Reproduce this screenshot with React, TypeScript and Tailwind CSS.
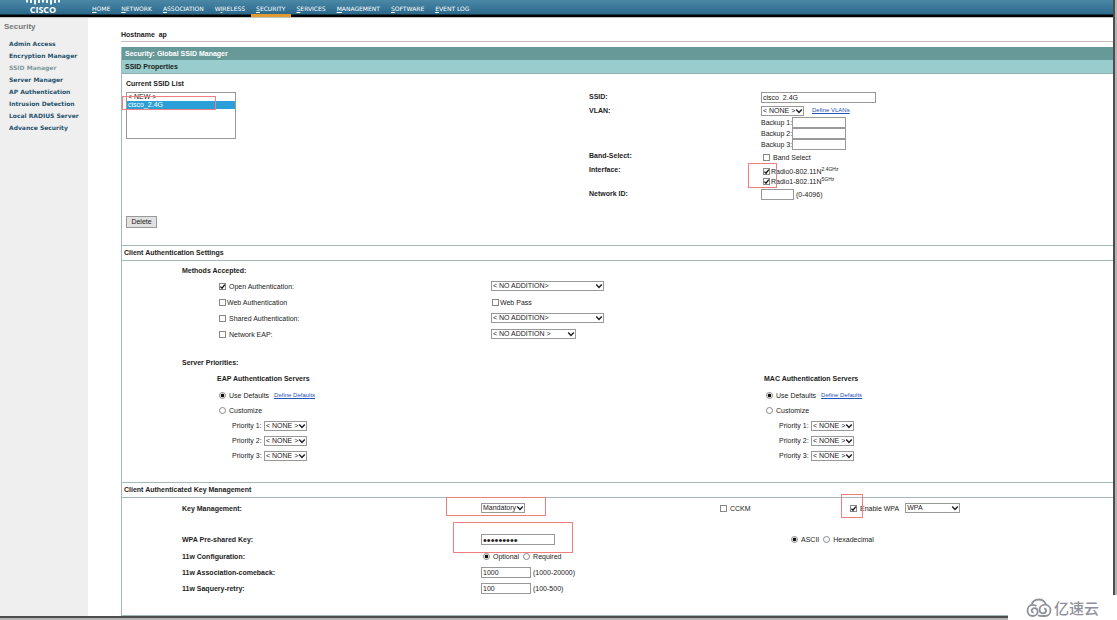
import { useId, type ReactNode } from "react"
import { clsx } from "clsx"

const navItems = [
  { name: "HOME", key: 0 },
  { name: "NETWORK", key: 0 },
  { name: "ASSOCIATION", key: 0 },
  { name: "WIRELESS", key: 1 },
  { name: "SECURITY", key: 0 },
  { name: "SERVICES", key: 0 },
  { name: "MANAGEMENT", key: 0 },
  { name: "SOFTWARE", key: 0 },
  { name: "EVENT LOG", key: 0 },
]

const sideItems = [
  "Admin Access",
  "Encryption Manager",
  "SSID Manager",
  "Server Manager",
  "AP Authentication",
  "Intrusion Detection",
  "Local RADIUS Server",
  "Advance Security",
]

function CiscoLogo() {
  return (
    <div className="flex w-[86px] flex-col items-center">
      <svg width="36" height="5" viewBox="0 0 36 5" className="block" aria-hidden="true">
        <path
          d="M2 0v2.500M6 0v3M10 0v4.500M14 0v3M18 0v2.500M22 0v3M26 0v4.500M30 0v3M34 0v2.500"
          stroke="#fff"
          strokeWidth="1.8"
          fill="none"
        />
      </svg>
      <span className="font-['Open_Sans',sans-serif] text-[9px]/[9px] font-bold text-white">CISCO</span>
    </div>
  )
}

function Header() {
  return (
    <header className="flex h-[18px] border-b border-[#b9c4c4] bg-[linear-gradient(#4b88a6,#2c6a8d_14px,#000_15px)]">
      <CiscoLogo />
      <nav className="flex gap-px pl-px font-['DejaVu_Sans',sans-serif] text-[6px]/[18px] text-white">
        {navItems.map(({ name, key }) => (
          <a
            key={name}
            href="#"
            className={clsx("h-[17px] px-[5px]", name === "SECURITY" && "border-b-[3px] border-[#e39a2e]")}
          >
            {name.slice(0, key)}
            <u>{name[key]}</u>
            {name.slice(key + 1)}
          </a>
        ))}
      </nav>
    </header>
  )
}

function Sidebar() {
  return (
    <aside className="w-[88px] shrink-0 bg-[#efefef]">
      <h2 className="pt-[3px] pl-1 text-[8px]/[12px] font-bold text-[#777]">Security</h2>
      <ul className="mt-[5px] pl-[9px] font-['DejaVu_Sans',sans-serif] text-[6px]/[12px] font-bold whitespace-nowrap text-[#27536e]">
        {sideItems.map((item) => (
          <li key={item} className="h-3">
            <a href="#" className={clsx(item === "SSID Manager" && "text-[#7d9a9c]")}>
              {item}
            </a>
          </li>
        ))}
      </ul>
    </aside>
  )
}

// red frame laid over a control to point it out
function Mark({ className }: { className: string }) {
  return <span aria-hidden="true" className={clsx("pointer-events-none absolute border border-[#f08080]", className)} />
}

function Select({ value, className, label, id }: { value: string; className: string; label?: string; id?: string }) {
  return (
    <span className={clsx("relative inline-flex", className)}>
      <select
        id={id}
        aria-label={label}
        className="h-[10px] w-full appearance-none border border-[#999] bg-white pl-px text-[7px]/[8px]"
      >
        <option>{value}</option>
      </select>
      <svg
        viewBox="0 0 8 6"
        width="8"
        height="6"
        className="pointer-events-none absolute top-[2px] right-px"
        aria-hidden="true"
      >
        <path d="M1.2 1.5 4 4.4 6.8 1.5" stroke="#222" strokeWidth="1.5" fill="none" />
      </svg>
    </span>
  )
}

function Check({ children, checked, tight }: { children: ReactNode; checked?: boolean; tight?: boolean }) {
  return (
    <label className={clsx("relative flex items-center", tight ? "gap-px" : "gap-[3px]")}>
      <input
        type="checkbox"
        defaultChecked={checked}
        className="peer size-[7px] shrink-0 appearance-none border border-[#888] bg-white"
      />
      <svg
        viewBox="0 0 7 7"
        className="pointer-events-none absolute left-0 hidden size-[7px] peer-checked:block"
        aria-hidden="true"
      >
        <path d="M1.4 3.6 3 5.2 5.8 1.6" stroke="#111" strokeWidth="1.3" fill="none" />
      </svg>
      <span>{children}</span>
    </label>
  )
}

function Radio({ children, name, checked }: { children: ReactNode; name: string; checked?: boolean }) {
  return (
    <label className="flex items-center gap-[3px]">
      <input
        type="radio"
        name={name}
        defaultChecked={checked}
        className="size-[7px] shrink-0 appearance-none rounded-full border border-[#888] bg-white checked:bg-[radial-gradient(#111_45%,#fff_60%)]"
      />
      {children}
    </label>
  )
}

function TextBox({
  className,
  value,
  label,
  id,
  type = "text",
}: {
  className: string
  value?: string
  label?: string
  id?: string
  type?: string
}) {
  return (
    <input
      id={id}
      type={type}
      aria-label={label}
      defaultValue={value}
      className={clsx(
        "border border-[#999] bg-white px-px",
        type === "password" ? "text-[11px]/[9px]" : "text-[7px]/[8px]",
        className
      )}
    />
  )
}

function Link({ children }: { children: ReactNode }) {
  return (
    <a href="#" className="text-[6px] text-[#2352b8] underline">
      {children}
    </a>
  )
}

function SectionTitle({ children }: { children: ReactNode }) {
  return <h3 className="border-y border-[#a3b8b8] pl-[2px] text-[7px]/[14px] font-bold">{children}</h3>
}

function SsidProperties() {
  return (
    <section className="grid h-[171px] grid-cols-[467fr_172fr_352fr]">
      <div className="flex flex-col items-start pl-1">
        <label htmlFor="ssid-list" className="mt-1 h-[14px] font-bold leading-[12px]">
          Current SSID List
        </label>
        <div className="relative">
          <select
            id="ssid-list"
            size={5}
            defaultValue="cisco_2.4G"
            className="block h-[47px] w-[110px] appearance-none overflow-hidden border border-[#999] bg-white text-[7px]/[8px]"
          >
            <option className="h-2 min-h-0 p-0 pl-px">&lt; NEW &gt;</option>
            <option className="h-2 min-h-0 bg-[linear-gradient(#2a9fd8,#2a9fd8)] p-0 pl-px [-webkit-text-fill-color:#fff]">
              cisco_2.4G
            </option>
          </select>
          <Mark className="top-1 -left-1 h-[14px] w-[94px]" />
        </div>
        <button
          type="button"
          className="mt-[77px] h-3 w-[31px] border border-[#999] bg-[#e1e1e1] text-center text-[7px]/[10px]"
        >
          Delete
        </button>
      </div>

      <div className="flex flex-col pt-4 font-bold">
        <label htmlFor="ssid" className="h-[14px] leading-[14px]">
          SSID:
        </label>
        <label htmlFor="vlan" className="h-[46px] leading-[14px]">
          VLAN:
        </label>
        <span className="h-[14px] leading-[12px]">Band-Select:</span>
        <span className="h-[23px] leading-[11px]">Interface:</span>
        <label htmlFor="network-id" className="h-[14px] leading-[14px]">
          Network ID:
        </label>
      </div>

      <div className="flex flex-col pt-4">
        <div className="flex h-[14px] items-center">
          <TextBox id="ssid" value="cisco_2.4G" className="h-[11px] w-[115px]" />
        </div>
        <div className="flex h-[13px] items-center gap-2">
          <Select id="vlan" value="< NONE >" className="w-[43px]" />
          <Link>Define VLANs</Link>
        </div>
        {[1, 2, 3].map((n) => (
          <label key={n} className="flex h-[11px] items-center">
            <span className="w-[31px] shrink-0 whitespace-nowrap">Backup {n}:</span>
            <TextBox className="h-[11px] w-[54px]" />
          </label>
        ))}
        <div className="flex h-[14px] items-center pl-[2px]">
          <Check>Band Select</Check>
        </div>
        <div className="relative h-[23px] pt-[2px] pl-[2px]">
          <div className="flex h-[10px] items-center">
            <Check checked tight>
              Radio0-802.11N<sup className="text-[5px]">2.4GHz</sup>
            </Check>
          </div>
          <div className="flex h-[10px] items-center">
            <Check checked tight>
              Radio1-802.11N<sup className="text-[5px]">5GHz</sup>
            </Check>
          </div>
          <Mark className="-top-px -left-[13px] h-[25px] w-[29px]" />
        </div>
        <div className="flex h-[14px] items-center gap-[2px]">
          <TextBox id="network-id" className="h-[11px] w-[33px]" />
          (0-4096)
        </div>
      </div>
    </section>
  )
}

function Servers({ title, name }: { title: string; name: string }) {
  const id = useId()
  return (
    <div>
      <h5 className="h-4 font-bold leading-4">{title}</h5>
      <div className="flex h-4 items-center gap-[5px] pl-[2px]">
        <Radio name={name} checked>
          Use Defaults
        </Radio>
        <Link>Define Defaults</Link>
      </div>
      <div className="flex h-[15px] items-center pl-[2px]">
        <Radio name={name}>Customize</Radio>
      </div>
      {[1, 2, 3].map((n) => (
        <div key={n} className="flex h-[15px] items-center pl-[15px]">
          <label htmlFor={id + n} className="w-8">
            Priority {n}:
          </label>
          <Select id={id + n} value="< NONE >" className="w-[43px]" />
        </div>
      ))}
    </div>
  )
}

function ClientAuthentication() {
  const row = "grid h-4 grid-cols-[272fr_622fr] items-center pl-[97px]"
  return (
    <section>
      <SectionTitle>Client Authentication Settings</SectionTitle>
      <h4 className="mt-px h-4 pl-[60px] font-bold leading-[18px]">Methods Accepted:</h4>
      <div className={row}>
        <Check checked>Open Authentication:</Check>
        <Select label="Open Authentication" value="< NO ADDITION>" className="w-[113px]" />
      </div>
      <div className={row}>
        <Check tight>Web Authentication</Check>
        <div className="pl-px">
          <Check tight>Web Pass</Check>
        </div>
      </div>
      <div className={row}>
        <Check>Shared Authentication:</Check>
        <Select label="Shared Authentication" value="< NO ADDITION>" className="w-[113px]" />
      </div>
      <div className={row}>
        <Check>Network EAP:</Check>
        <Select label="Network EAP" value="< NO ADDITION >" className="w-[85px]" />
      </div>

      <h4 className="mt-[13px] h-4 pl-[60px] font-bold leading-4">Server Priorities:</h4>
      <div className="grid grid-cols-[547fr_349fr] pb-[19px] pl-[95px]">
        <Servers title="EAP Authentication Servers" name="eap" />
        <Servers title="MAC Authentication Servers" name="mac" />
      </div>
    </section>
  )
}

function KeyManagement() {
  const cols = "grid grid-cols-[299fr_239fr_71fr_322fr] items-center pl-[60px]"
  return (
    <section className="border-b border-[#a3b8b8] pb-[18px]">
      <SectionTitle>Client Authenticated Key Management</SectionTitle>
      <div className={clsx(cols, "h-5")}>
        <label htmlFor="key-management" className="font-bold">
          Key Management:
        </label>
        <div className="relative flex">
          <Select id="key-management" value="Mandatory" className="w-[44px]" />
          <Mark className="-top-[6px] -left-[35px] h-[19px] w-[100px]" />
        </div>
        <Check>CCKM</Check>
        <div className="relative flex items-center gap-[6px] pl-[59px]">
          <Check checked>Enable WPA</Check>
          <Select label="WPA version" value="WPA" className="w-[55px]" />
          <Mark className="-top-[9px] left-[50px] h-[24px] w-[22px]" />
        </div>
      </div>

      <div className={clsx(cols, "mt-[13px] h-[17px]")}>
        <label htmlFor="psk" className="font-bold">
          WPA Pre-shared Key:
        </label>
        <div className="relative flex">
          <TextBox id="psk" type="password" value="123456789" className="h-[11px] w-[74px]" />
          <Mark className="-top-3 -left-[28px] h-[31px] w-[120px]" />
        </div>
        <span />
        <div className="flex gap-1">
          <Radio name="format" checked>
            ASCII
          </Radio>
          <Radio name="format">Hexadecimal</Radio>
        </div>
      </div>
      <div className={clsx(cols, "h-4")}>
        <span className="font-bold">11w Configuration:</span>
        <div className="flex gap-1 pl-[2px]">
          <Radio name="pmf" checked>
            Optional
          </Radio>
          <Radio name="pmf">Required</Radio>
        </div>
      </div>
      <div className={clsx(cols, "h-4")}>
        <label htmlFor="comeback" className="font-bold">
          11w Association-comeback:
        </label>
        <div className="flex items-center gap-[2px]">
          <TextBox id="comeback" value="1000" className="h-[11px] w-[50px]" />
          (1000-20000)
        </div>
      </div>
      <div className={clsx(cols, "h-[17px]")}>
        <label htmlFor="retry" className="font-bold">
          11w Saquery-retry:
        </label>
        <div className="flex items-center gap-[2px]">
          <TextBox id="retry" value="100" className="h-[11px] w-[50px]" />
          (100-500)
        </div>
      </div>
    </section>
  )
}

function Watermark() {
  return (
    <div className="absolute right-0 bottom-0 flex h-[25px] w-[109px] items-center gap-[2px] bg-white pl-[18px] text-[#8f919b]">
      <svg width="26" height="20" viewBox="0 0 26 20" fill="none" stroke="currentColor" strokeWidth="1.8" aria-hidden="true">
        <path d="M5.500 7.500C6.200 3.800 9.200 1.500 12.800 1.500c3.400 0 6 1.800 7.200 5" />
        <path d="M10.500 8.200C9.400 7.200 8 6.800 6.600 6.900 3.700 7.100 1.500 9.500 1.500 12.600c0 3.200 2.200 5.400 5.200 5.400 2.900 0 5-2 5-4.500 0-2-1.400-3.400-3.200-3.400-1.600 0-2.800 1.100-2.800 2.500 0 1.100.8 1.900 1.900 1.900" />
        <path d="M12 17.200c1.200.6 2.600.8 4 .8h3c3.200 0 5.500-2.400 5.500-5.500 0-3.300-2.400-5.800-5.500-5.800-3.100 0-5.400 2.100-5.400 4.800 0 2.200 1.500 3.800 3.500 3.800 1.700 0 3-1.200 3-2.700 0-1.200-.9-2-2-2" />
      </svg>
      <span className="font-['Noto_Sans_CJK_SC',sans-serif] text-[15px]/[20px] font-medium whitespace-nowrap">亿速云</span>
    </div>
  )
}

export default function App() {
  return (
    <div className="relative min-h-screen bg-[#b4b4b4] pr-[2px] pb-[2px] font-['Liberation_Sans',sans-serif] text-[7px]/[9px] text-[#222]">
      <div className="flex min-h-[calc(100vh-2px)] flex-col border-r-2 border-b-2 border-[#4d4d4d] bg-white">
        <Header />
        <div className="flex grow">
          <Sidebar />
          <main className="grow pl-[33px]">
            <p className="h-6 border-b border-[#c4bcbe] pt-3 font-bold">Hostname&nbsp; ap</p>
            <div className="mt-[5px] border-l border-[#a3b8b8]">
              <h1 className="bg-[#679999] pl-[3px] text-[7px]/[13px] font-bold text-white">
                Security: Global SSID Manager
              </h1>
              <h2 className="border-b border-[#8fb0b0] bg-[#99cccc] pl-[3px] text-[7px]/[13px] font-bold">
                SSID Properties
              </h2>
              <SsidProperties />
              <ClientAuthentication />
              <KeyManagement />
            </div>
          </main>
        </div>
      </div>
      <Watermark />
    </div>
  )
}
